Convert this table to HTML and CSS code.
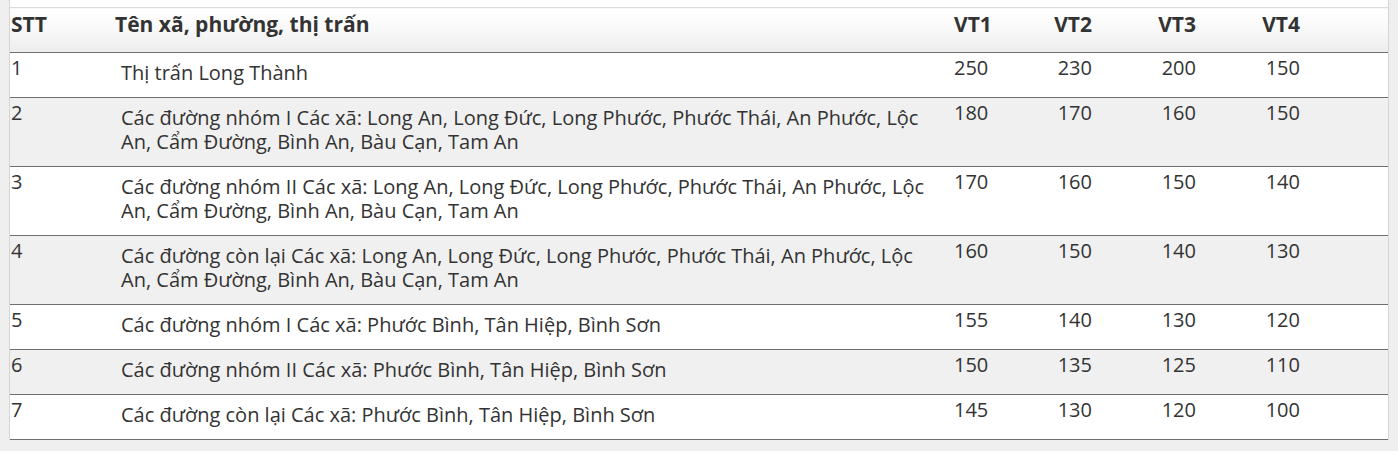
FILE: index.html
```
<!DOCTYPE html>
<html lang="vi">
<head>
<meta charset="utf-8">
<title>Bảng giá đất</title>
<link rel="stylesheet" href="styles.css">
</head>
<body>
<div class="wrap">
<table class="price">
<colgroup>
<col class="c-stt"><col class="c-name"><col class="c-vt1"><col class="c-vt"><col class="c-vt"><col class="c-vt"><col>
</colgroup>
<thead>
<tr><th class="stt">STT</th><th class="name">Tên xã, phường, thị trấn</th><th class="num">VT1</th><th class="num">VT2</th><th class="num">VT3</th><th class="num">VT4</th><th></th></tr>
</thead>
<tbody>
<tr><td class="stt">1</td><td class="name">Thị trấn Long Thành</td><td class="num">250</td><td class="num">230</td><td class="num">200</td><td class="num">150</td><td></td></tr>
<tr class="alt"><td class="stt">2</td><td class="name">Các đường nhóm I Các xã: Long An, Long Đức, Long Phước, Phước Thái, An Phước, Lộc An, Cẩm Đường, Bình An, Bàu Cạn, Tam An</td><td class="num">180</td><td class="num">170</td><td class="num">160</td><td class="num">150</td><td></td></tr>
<tr><td class="stt">3</td><td class="name">Các đường nhóm II Các xã: Long An, Long Đức, Long Phước, Phước Thái, An Phước, Lộc An, Cẩm Đường, Bình An, Bàu Cạn, Tam An</td><td class="num">170</td><td class="num">160</td><td class="num">150</td><td class="num">140</td><td></td></tr>
<tr class="alt"><td class="stt">4</td><td class="name">Các đường còn lại Các xã: Long An, Long Đức, Long Phước, Phước Thái, An Phước, Lộc An, Cẩm Đường, Bình An, Bàu Cạn, Tam An</td><td class="num">160</td><td class="num">150</td><td class="num">140</td><td class="num">130</td><td></td></tr>
<tr><td class="stt">5</td><td class="name">Các đường nhóm I Các xã: Phước Bình, Tân Hiệp, Bình Sơn</td><td class="num">155</td><td class="num">140</td><td class="num">130</td><td class="num">120</td><td></td></tr>
<tr class="alt"><td class="stt">6</td><td class="name">Các đường nhóm II Các xã: Phước Bình, Tân Hiệp, Bình Sơn</td><td class="num">150</td><td class="num">135</td><td class="num">125</td><td class="num">110</td><td></td></tr>
<tr><td class="stt">7</td><td class="name">Các đường còn lại Các xã: Phước Bình, Tân Hiệp, Bình Sơn</td><td class="num">145</td><td class="num">130</td><td class="num">120</td><td class="num">100</td><td></td></tr>
</tbody>
</table>
</div>
</body>
</html>
```

FILE: styles.css
```
html, body {
  margin: 0;
  padding: 0;
  background: #efefef;
}
body {
  font-family: "Open Sans", "Liberation Sans", sans-serif;
  color: #333;
}
.wrap {
  margin-left: 9px;
  width: 1378px;
  background: #fff;
  border-left: 1px solid #d4d4d4;
  border-right: 1px solid #d4d4d4;
  padding-top: 7px;
}
.price {
  width: 100%;
  border-collapse: collapse;
  table-layout: fixed;
  font-size: 20px;
}
.c-stt { width: 102px; }
.c-name { width: 838px; }
.c-vt1 { width: 42px; }
.c-vt { width: 104px; }
.price thead th {
  height: 45px;
  box-sizing: border-box;
  padding: 3px 4px 0;
  vertical-align: top;
  font-family: "Open Sans", "Liberation Sans", sans-serif;
  font-weight: 700;
  font-size: 21px;
  line-height: 26px;
  color: #333;
  text-align: left;
  background: linear-gradient(to bottom, #ffffff 0%, #f8f8f8 50%, #ececec 100%);
  border-top: 1px solid #dcdcdc;
  border-bottom: 1px solid #6f6f6f;
}
.price thead th.stt { padding-left: 1px; }
.price thead th.name { padding-left: 3px; }
.price th.num, .price td.num { text-align: right; }
.price td {
  padding: 3px 4px 17px;
  vertical-align: top;
  line-height: 24px;
  border-bottom: 1px solid #6f6f6f;
}
.price td.stt { padding-left: 1px; }
.price td.name { padding: 8px 4px 12px 9px; }
.price tr.alt td { background: #f0f0f0; }
```
